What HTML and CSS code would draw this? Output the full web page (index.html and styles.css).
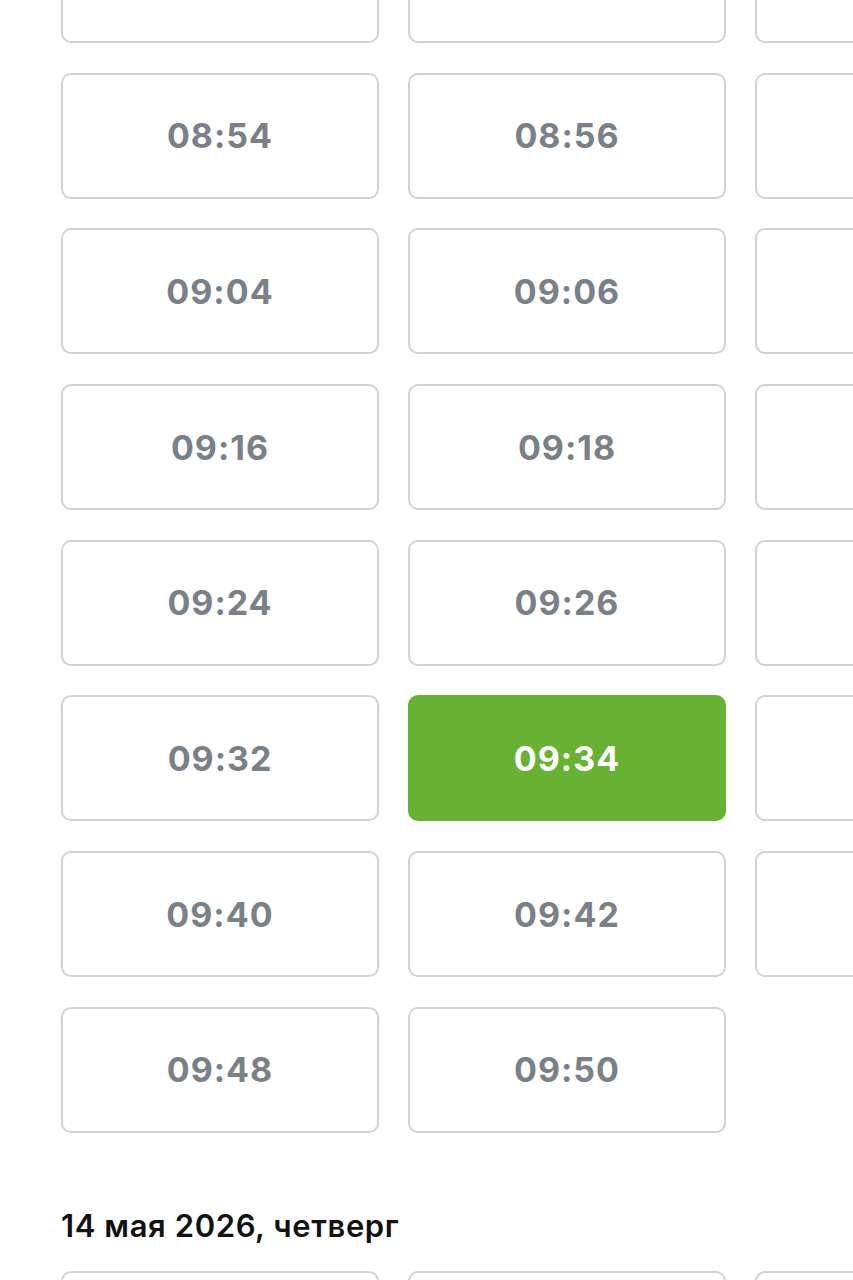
FILE: index.html
```html
<!DOCTYPE html>
<html lang="ru">
<head>
    <meta charset="UTF-8">
    <meta name="viewport" content="width=device-width, initial-scale=1.0">
    <title>Выбор времени</title>
    <link rel="stylesheet" href="styles.css">
</head>
<body>
    <div class="page">
        <div class="slots slots-first">
            <div class="slot"></div>
            <div class="slot"></div>
            <div class="slot"></div>
            <div class="slot">08:54</div>
            <div class="slot">08:56</div>
            <div class="slot"></div>
            <div class="slot">09:04</div>
            <div class="slot">09:06</div>
            <div class="slot"></div>
            <div class="slot">09:16</div>
            <div class="slot">09:18</div>
            <div class="slot"></div>
            <div class="slot">09:24</div>
            <div class="slot">09:26</div>
            <div class="slot"></div>
            <div class="slot">09:32</div>
            <div class="slot slot-active">09:34</div>
            <div class="slot"></div>
            <div class="slot">09:40</div>
            <div class="slot">09:42</div>
            <div class="slot"></div>
            <div class="slot">09:48</div>
            <div class="slot">09:50</div>
        </div>

        <h3 class="day-title">14 мая 2026, четверг</h3>

        <div class="slots">
            <div class="slot"></div>
            <div class="slot"></div>
            <div class="slot"></div>
        </div>
    </div>
</body>
</html>
```

FILE: styles.css
```css
body {
    margin: 0;
    background-color: #ffffff;
    font-family: Inter, "Noto Sans", Arial, sans-serif;
    overflow: hidden;
}
.page {
    width: 853px;
    height: 1280px;
    overflow: hidden;
    padding-left: 61px;
    box-sizing: border-box;
}
.slots {
    display: grid;
    grid-template-columns: repeat(3, 318px);
    grid-auto-rows: 126px;
    column-gap: 29px;
    row-gap: 29.7px;
}
.slots-first {
    margin-top: -83px;
}
.slot {
    display: flex;
    align-items: center;
    justify-content: center;
    border: 2px solid #d2d2d4;
    border-radius: 10px;
    box-sizing: border-box;
    color: #7a8088;
    font-size: 34px;
    font-weight: 700;
    letter-spacing: 1px;
}
.slot-active {
    background-color: #67b233;
    border-color: #67b233;
    color: #ffffff;
}
.day-title {
    margin: 74px 0 27px;
    font-size: 31px;
    line-height: 37px;
    font-weight: 600;
    letter-spacing: 0.6px;
    color: #111111;
}
```
